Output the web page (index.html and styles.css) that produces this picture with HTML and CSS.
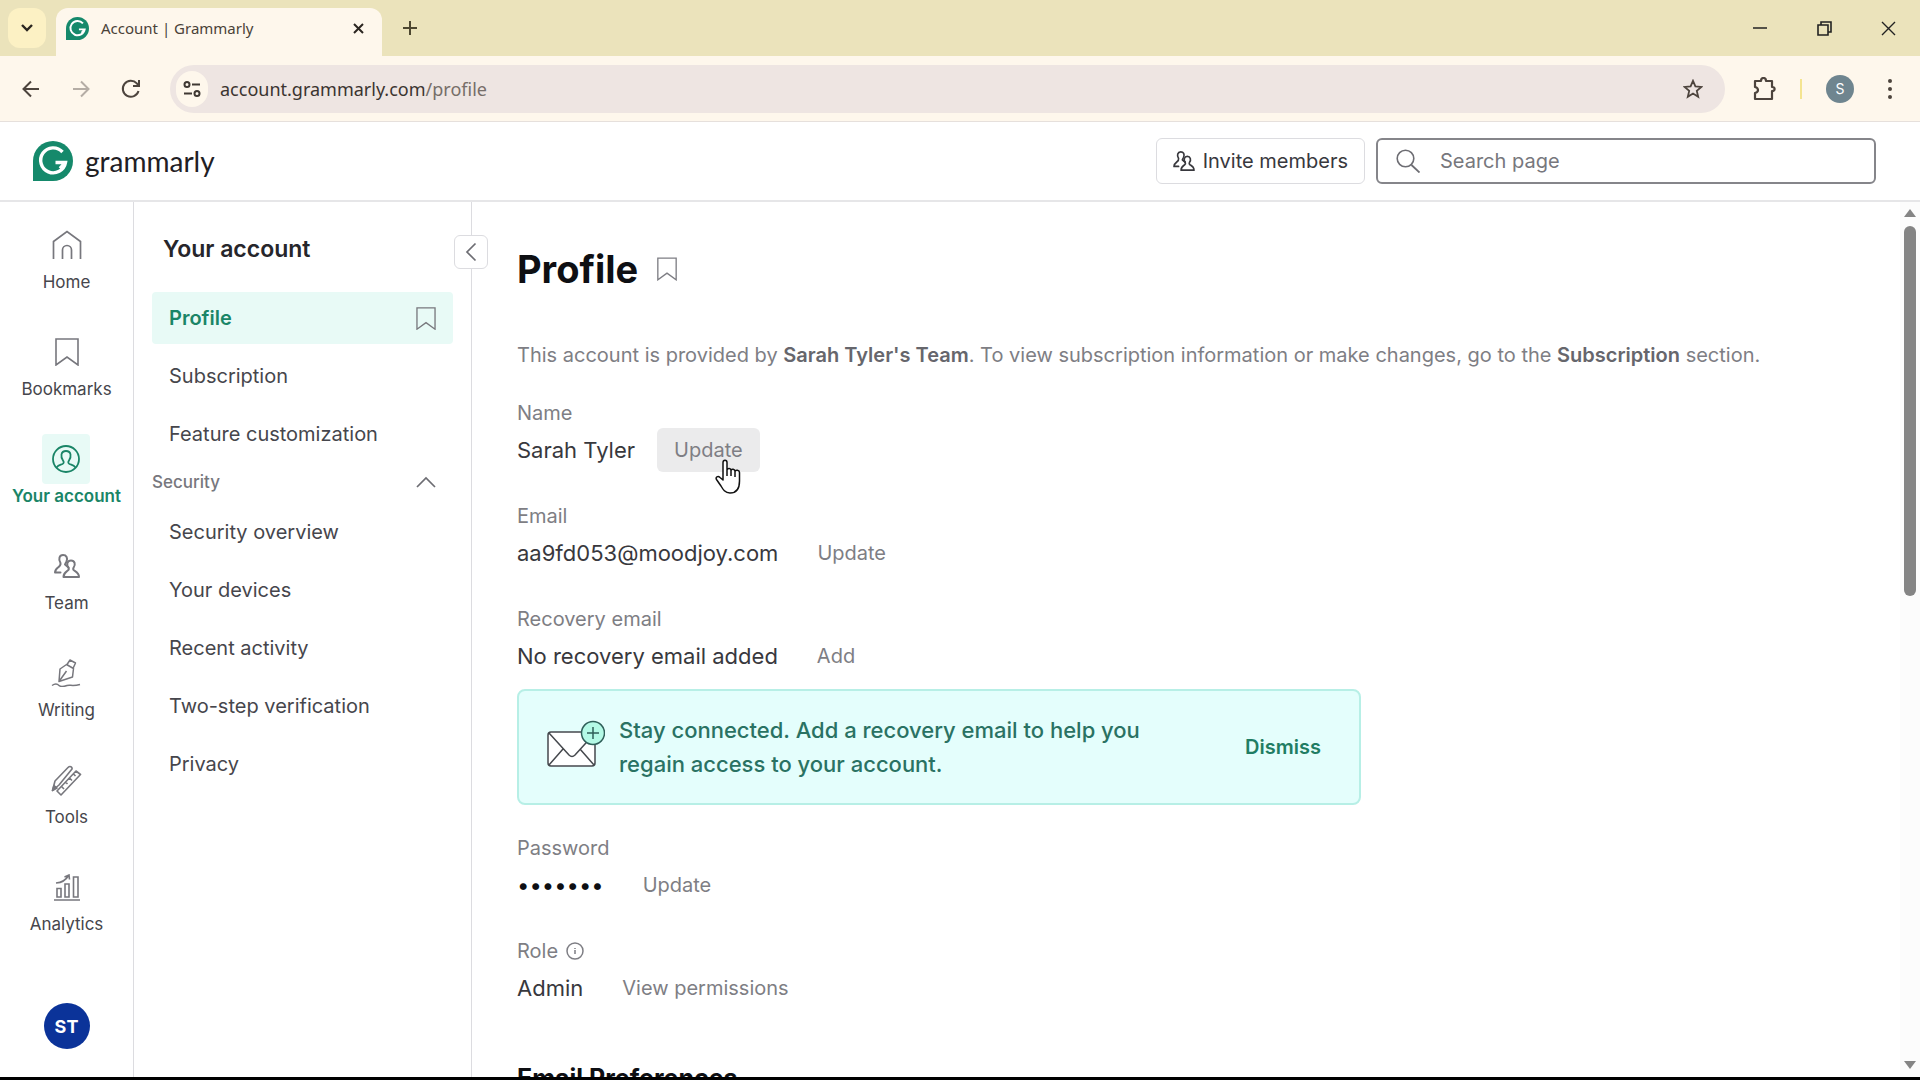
FILE: index.html
```html
<!DOCTYPE html>
<html lang="en">

<head>
    <meta charset="UTF-8" />
    <meta name="viewport" content="width=device-width, initial-scale=1.0" />
    <title>Account | Grammarly</title>
    <link rel="stylesheet" href="styles.css">
</head>

<body>
    <!-- shared icon shapes -->
    <svg class="sprite" aria-hidden="true">
        <symbol id="logo" viewBox="0 0 40 40">
            <path d="M0 40V20a20 20 0 1 1 20 20z" fill="#15896b" />
            <path d="M29.500 11A12.500 12.500 0 1 0 32.500 21.500H22.500M32.500 21.500l-5.500 6" fill="none" stroke="#fff" stroke-width="3.400" />
        </symbol>
        <symbol id="bookmark" viewBox="0 0 24 28">
            <path d="M1 1h22v26l-11-8-11 8z" fill="none" stroke="currentColor" stroke-width="1.600" />
        </symbol>
        <symbol id="people" viewBox="0 0 26 24">
            <g fill="none" stroke="currentColor" stroke-width="2" stroke-linejoin="round" stroke-linecap="round">
                <path d="M6.500 9C4 5 5.500 1 9 1s5 3 3.500 6.500L11 10.500l3.500 3M6.500 9c.5 2-.5 3-2.500 4.500C2 15 1 16 1 18.500h5.500" />
                <path d="M17 6.500c3.700 0 5 4 2.500 7.300-.6 1.200-.3 2 .7 2.700 2.500 1.500 4.800 2.500 4.800 6.500H9.500c0-4 2.300-5 4.300-6.500 1-.7 1.300-1.500.7-2.700-2.500-3.300-1.200-7.300 2.500-7.300z" />
            </g>
        </symbol>
    </svg>

    <div class="tabstrip">
        <button class="tab-search" aria-label="Search tabs">
            <svg width="12" height="8" viewBox="0 0 12 8"><path d="M1 1l5 5 5-5" fill="none" stroke="#2b2620" stroke-width="2.400" /></svg>
        </button>
        <div class="tab">
            <svg width="23" height="23"><use href="#logo" /></svg>
            <span>Account | Grammarly</span>
            <button class="tab-close" aria-label="Close tab">
                <svg width="11" height="11" viewBox="0 0 11 11"><path d="M1 1l9 9M10 1l-9 9" stroke="#2b2620" stroke-width="2" /></svg>
            </button>
        </div>
        <button class="tab-new" aria-label="New tab">
            <svg width="16" height="16" viewBox="0 0 16 16"><path d="M8 1v14M1 8h14" stroke="#4d4730" stroke-width="2" /></svg>
        </button>
        <div class="window-buttons">
            <button aria-label="Minimize"><svg width="14" height="14" viewBox="0 0 14 14"><path d="M0 7h14" stroke="#222" stroke-width="1.500" /></svg></button>
            <button aria-label="Restore"><svg width="15" height="15" viewBox="0 0 15 15"><path d="M1 4h10v10H1zM4 4V1h10v10h-3" fill="none" stroke="#222" stroke-width="1.600" /></svg></button>
            <button aria-label="Close"><svg width="15" height="15" viewBox="0 0 15 15"><path d="M1 1l13 13M14 1L1 14" stroke="#222" stroke-width="1.400" /></svg></button>
        </div>
    </div>

    <div class="toolbar">
        <div class="nav-buttons">
            <button aria-label="Back"><svg width="18" height="18" viewBox="0 0 18 18"><path d="M17 9H2M9 1.500L1.500 9 9 16.500" fill="none" stroke="#4d443d" stroke-width="2" /></svg></button>
            <button aria-label="Forward"><svg width="18" height="18" viewBox="0 0 18 18"><path d="M1 9h15M9 1.500L16.500 9 9 16.500" fill="none" stroke="#b5ada5" stroke-width="2" /></svg></button>
            <button aria-label="Reload"><svg width="20" height="20" viewBox="0 0 20 20"><path d="M17.500 12A8 8 0 1 1 15.800 4.400l1.700 2M18 1v6h-6" fill="none" stroke="#4d443d" stroke-width="2" /></svg></button>
        </div>
        <div class="omnibox">
            <button class="site-info" aria-label="View site information">
                <svg width="18" height="18" viewBox="0 0 18 18"><g fill="none" stroke="#3f3833" stroke-width="2"><circle cx="4" cy="4.500" r="2.500" /><path d="M9 4.500h8M1 13.500h8" /><circle cx="14" cy="13.500" r="2.500" /></g></svg>
            </button>
            <span class="url">account.grammarly.com<span class="path">/profile</span></span>
            <button class="star" aria-label="Bookmark this tab">
                <svg width="20" height="20" viewBox="0 0 20 20"><path d="M10 1.800l2.400 5.600 6 .5-4.600 4 1.400 5.900-5.200-3.200-5.200 3.200 1.400-5.900-4.600-4 6-.5z" fill="none" stroke="#4d443d" stroke-width="1.800" /></svg>
            </button>
        </div>
        <button class="extensions" aria-label="Extensions">
            <svg width="23" height="24" viewBox="0 0 23 24"><path d="M2 4h6c0-4 5-4 5 0h6v6c3.500 0 3.500 4 0 4v8H2v-6c4-1 4-5 0-6z" fill="none" stroke="#4d443d" stroke-width="2.200" stroke-linejoin="round" /></svg>
        </button>
        <span class="divider"></span>
        <button class="user" aria-label="Profile S">S</button>
        <button class="menu" aria-label="Menu">
            <svg width="4" height="20" viewBox="0 0 4 20"><g fill="#4d443d"><circle cx="2" cy="2" r="2" /><circle cx="2" cy="10" r="2" /><circle cx="2" cy="18" r="2" /></g></svg>
        </button>
    </div>

    <header class="header">
        <a class="brand" href="#">
            <svg width="40" height="40"><use href="#logo" /></svg>
            <span>grammarly</span>
        </a>
        <button class="invite">
            <svg width="22" height="20"><use href="#people" /></svg>
            Invite members
        </button>
        <label class="search">
            <svg width="24" height="24" viewBox="0 0 24 24"><path d="M15.500 16l8 7.500" stroke="#6d6d73" stroke-width="1.800" /><circle cx="9.500" cy="9.500" r="8.300" fill="none" stroke="#6d6d73" stroke-width="1.600" /></svg>
            <input type="text" placeholder="Search page" aria-label="Search page" />
        </label>
    </header>

    <div class="app">
        <nav class="rail">
            <a href="#">
                <span class="icon"><svg width="30" height="30" viewBox="0 0 30 30"><path d="M1.500 29V11.500L15 1.500l13.500 10V29M10.500 29V20a4.500 4.500 0 0 1 9 0v9" fill="none" stroke="currentColor" stroke-width="1.700" /></svg></span>
                Home
            </a>
            <a href="#">
                <span class="icon"><svg width="24" height="28"><use href="#bookmark" /></svg></span>
                Bookmarks
            </a>
            <a href="#" class="active">
                <span class="icon"><svg width="28" height="28" viewBox="0 0 28 28"><g fill="none" stroke="currentColor" stroke-width="1.800"><circle cx="14" cy="14" r="13" /><path d="M4.500 22.500c2-2.500 4-2.500 6-3.500 1.500-.8 1.500-2 .5-3.500C8.500 12 8.500 6 14 6s5.500 6 3 9.500c-1 1.500-1 2.700.5 3.500 2 1 4 1 6 3.500" /></g></svg></span>
                Your account
            </a>
            <a href="#">
                <span class="icon"><svg width="26" height="24"><use href="#people" /></svg></span>
                Team
            </a>
            <a href="#">
                <span class="icon"><svg width="30" height="28" viewBox="0 0 30 28"><g fill="none" stroke="currentColor" stroke-width="1.500" stroke-linejoin="round"><path d="M15.500 5.500l7 4-1 8.500-13.500 4.500L9 10zM16 5.500l3-4.500 5.500 3-2.500 5.500M8 22.500L15.500 12" /><path d="M1 26.500c3-2 5-2 7 0s5 1 8 0 5 1 13-1" /></g></svg></span>
                Writing
            </a>
            <a href="#">
                <span class="icon"><svg width="31" height="31" viewBox="0 0 31 31"><g fill="none" stroke="currentColor" stroke-width="1.600" stroke-linejoin="round"><path d="M1.500 25.500L4 16 17 2.500c2-2 4.500-.5 4 1.500L8 20zM1.500 25.500l3-3M25 6l4.500 3.500L10 30l-4-4zM22.500 9l2 2M18.500 13l2.500 2.500M14.500 17l2 2M10.500 21.500l2.500 2.500" /><path d="M1.500 25.500l1.500-5 3 2.500z" fill="currentColor" /></g></svg></span>
                Tools
            </a>
            <a href="#">
                <span class="icon"><svg width="26" height="27" viewBox="0 0 26 27"><g fill="none" stroke="currentColor" stroke-width="1.600"><path d="M3 14.500h4V23H3zM11 10h4v13h-4zM19.500 3H24v20h-4.500zM0 26h26" /><path d="M2 9c6-.5 10-3 12.500-7.500M10.500 3l4.500-2 .5 4.500" /></g></svg></span>
                Analytics
            </a>
            <button class="avatar">ST</button>
        </nav>

        <aside class="panel">
            <h2>Your account</h2>
            <button class="collapse" aria-label="Collapse panel">
                <svg width="12" height="20" viewBox="0 0 12 20"><path d="M10.500 1.500L2 10l8.500 8.500" fill="none" stroke="#6d6d73" stroke-width="1.700" /></svg>
            </button>
            <ul>
                <li><a href="#" class="active">Profile <svg width="20" height="23"><use href="#bookmark" /></svg></a></li>
                <li><a href="#">Subscription</a></li>
                <li><a href="#">Feature customization</a></li>
            </ul>
            <button class="section">
                Security
                <svg width="20" height="12" viewBox="0 0 20 12"><path d="M1 11l9-9 9 9" fill="none" stroke="#6d6d73" stroke-width="1.700" /></svg>
            </button>
            <ul>
                <li><a href="#">Security overview</a></li>
                <li><a href="#">Your devices</a></li>
                <li><a href="#">Recent activity</a></li>
                <li><a href="#">Two-step verification</a></li>
                <li><a href="#">Privacy</a></li>
            </ul>
        </aside>

        <main class="content">
            <div class="title">
                <h1>Profile</h1>
                <button aria-label="Bookmark page"><svg width="20" height="24"><use href="#bookmark" /></svg></button>
            </div>
            <p class="intro">This account is provided by <strong>Sarah Tyler's Team</strong>. To view subscription information or make changes, go to the <strong>Subscription</strong> section.</p>

            <section class="field">
                <h3>Name</h3>
                <div class="row">
                    <span>Sarah Tyler</span>
                    <button class="hover">Update
                        <svg class="cursor" width="26" height="35" viewBox="0 0 26 35"><path d="M8 21V3.500C8 .5 12 .5 12 3.500V11c.5-2 4-2 4 .5.5-2 4-1.500 4 1 .5-2 4.500-1.500 4.500 1V22c0 7-3 12-9.500 12-5 0-7-3.500-9-7l-4.500-6.500C0 18 3 16.500 5 18.500zM12 11v6M16 11.500V17M20 12.500V18" fill="#fff" stroke="#111" stroke-width="1.500" stroke-linejoin="round" /></svg>
                    </button>
                </div>
            </section>
            <section class="field">
                <h3>Email</h3>
                <div class="row">
                    <span>aa9fd053@moodjoy.com</span>
                    <button>Update</button>
                </div>
            </section>
            <section class="field">
                <h3>Recovery email</h3>
                <div class="row">
                    <span>No recovery email added</span>
                    <button>Add</button>
                </div>
                <div class="banner">
                    <svg width="58" height="54" viewBox="0 0 58 54">
                        <rect x="1" y="12" width="47" height="34" rx="3" fill="#fff" stroke="#45484d" stroke-width="1.500" />
                        <path d="M2 13l20 22c2 2 4 2 6 0l20-22M2 45l14-16M47 45L33 29" fill="none" stroke="#45484d" stroke-width="1.500" />
                        <circle cx="46" cy="13" r="11.500" fill="#b4fae6" stroke="#2f5f59" stroke-width="1.500" />
                        <path d="M46 7v12M40 13h12" stroke="#2f5f59" stroke-width="1.500" />
                    </svg>
                    <p>Stay connected. Add a recovery email to help you regain access to your account.</p>
                    <button>Dismiss</button>
                </div>
            </section>
            <section class="field">
                <h3>Password</h3>
                <div class="row">
                    <span class="dots">•••••••</span>
                    <button>Update</button>
                </div>
            </section>
            <section class="field">
                <h3>Role <svg width="18" height="18" viewBox="0 0 18 18"><circle cx="9" cy="9" r="8" fill="none" stroke="currentColor" stroke-width="1.500" /><path d="M9 8v4M9 6v1" stroke="currentColor" stroke-width="1.500" /></svg></h3>
                <div class="row">
                    <span>Admin</span>
                    <button>View permissions</button>
                </div>
            </section>
            <h2>Email Preferences</h2>
        </main>

        <div class="scrollbar" aria-hidden="true">
            <span class="up"></span>
            <span class="thumb"></span>
            <span class="down"></span>
        </div>
    </div>
</body>

</html>
```
FILE: styles.css
```css
* {
    box-sizing: border-box;
    margin: 0;
    padding: 0;
}

body {
    display: flex;
    flex-direction: column;
    height: 100vh;
    overflow: hidden;
    border-bottom: 3px solid #000;
    font-family: Inter, sans-serif;
    font-size: 20px;
    background-color: #fff;
    color: #46464c;
}

button {
    display: flex;
    align-items: center;
    justify-content: center;
    border: none;
    background: none;
    font: inherit;
    color: inherit;
    cursor: pointer;
}

a {
    color: inherit;
    text-decoration: none;
}

ul {
    list-style: none;
}

svg {
    display: block;
    flex: none;
}

.sprite {
    position: absolute;
    width: 0;
    height: 0;
}

/* browser window */
.tabstrip {
    display: flex;
    flex: none;
    height: 56px;
    padding: 8px 0 0 8px;
    background-color: #ebe3bb;
    font-family: "Noto Sans", sans-serif;
    font-size: 15px;
}

.tab-search {
    width: 38px;
    height: 40px;
    border-radius: 12px;
    background-color: #fcf1c4;
}

.tab {
    display: flex;
    align-items: center;
    gap: 12px;
    width: 326px;
    margin-left: 10px;
    padding: 0 16px 8px 10px;
    border-radius: 12px 12px 0 0;
    background-color: #fef7ec;
    color: #4a4238;
}

.tab-close {
    width: 16px;
    height: 16px;
    margin-left: auto;
}

.tab-new {
    width: 40px;
    height: 40px;
    margin-left: 8px;
}

.window-buttons {
    display: flex;
    height: 40px;
    margin-left: auto;
}

.window-buttons button {
    width: 64px;
}

.toolbar {
    display: flex;
    flex: none;
    align-items: center;
    height: 66px;
    padding: 0 16px 0 14px;
    border-bottom: 1px solid #e6e0dc;
    background-color: #fef7ec;
}

.nav-buttons {
    display: flex;
    gap: 16px;
    margin-right: 22px;
}

.nav-buttons button {
    width: 34px;
    height: 34px;
}

.omnibox {
    display: flex;
    flex: 1;
    align-items: center;
    height: 48px;
    padding: 0 22px 0 6px;
    border-radius: 24px;
    background-color: #eee5e2;
    font-family: "Noto Sans", sans-serif;
    font-size: 18px;
    color: #3b3430;
}

.site-info {
    width: 32px;
    height: 36px;
    border-radius: 18px;
    background-color: #fef7ec;
}

.url {
    margin-left: 12px;
}

.path {
    color: #766e69;
}

.star {
    margin-left: auto;
}

.extensions {
    margin-left: 28px;
}

.divider {
    width: 2px;
    height: 20px;
    margin: 0 24px;
    background-color: #f4e491;
}

.user {
    width: 28px;
    height: 28px;
    border-radius: 50%;
    background-color: #6f858f;
    font-size: 14px;
    color: #fff;
}

.menu {
    width: 28px;
    margin-left: 22px;
}

/* page header */
.header {
    display: flex;
    flex: none;
    align-items: center;
    gap: 11px;
    height: 80px;
    padding: 0 44px 0 33px;
    border-bottom: 2px solid #e6e6e8;
}

.brand {
    display: flex;
    align-items: center;
    gap: 12px;
    margin-right: auto;
    font-family: Lato, sans-serif;
    font-size: 28px;
    line-height: 36px;
    color: #1f2024;
}

.invite {
    gap: 8px;
    height: 46px;
    padding: 0 16px;
    border: 1px solid #dcdce0;
    border-radius: 6px;
    color: #38383d;
}

.search {
    display: flex;
    align-items: center;
    gap: 20px;
    width: 500px;
    height: 46px;
    padding: 0 18px;
    border: 2px solid #85858a;
    border-radius: 6px;
}

.search input {
    flex: 1;
    min-width: 0;
    border: none;
    outline: none;
    background: none;
    font: inherit;
}

.search input::placeholder {
    color: #77777d;
    opacity: 1;
}

/* page body */
.app {
    display: flex;
    flex: 1;
    min-height: 0;
}

.rail {
    display: flex;
    flex: none;
    flex-direction: column;
    align-items: center;
    gap: 27px;
    width: 134px;
    padding: 18px 0 28px;
    border-right: 1px solid #dcdce0;
    font-size: 17px;
}

.rail a {
    display: flex;
    flex-direction: column;
    align-items: center;
    height: 80px;
    line-height: 24px;
}

.rail .icon {
    display: flex;
    align-items: center;
    justify-content: center;
    width: 48px;
    height: 50px;
    border-radius: 4px;
    color: #77777d;
}

.rail .active {
    font-weight: 600;
    color: #1a8567;
}

.rail .active .icon {
    background-color: #e8faf6;
    color: #1a8567;
}

.avatar {
    width: 46px;
    height: 46px;
    margin-top: auto;
    border-radius: 50%;
    background-color: #0b3399;
    font-size: 18px;
    font-weight: 700;
    color: #fff;
}

.panel {
    position: relative;
    flex: none;
    width: 338px;
    padding: 31px 18px 0;
    border-right: 1px solid #dcdce0;
}

.panel h2 {
    margin: 0 11px 27px;
    font-size: 23px;
    font-weight: 600;
    line-height: 32px;
    color: #26262b;
}

.collapse {
    position: absolute;
    top: 33px;
    right: -17px;
    width: 34px;
    height: 34px;
    border: 1px solid #dcdce0;
    border-radius: 6px;
    background-color: #fff;
}

.panel ul {
    display: grid;
    gap: 6px;
}

.panel li a {
    display: flex;
    align-items: center;
    justify-content: space-between;
    height: 52px;
    padding: 0 17px;
    border-radius: 4px;
}

.panel li .active {
    background-color: #e8faf6;
    font-weight: 600;
    color: #1a8567;
}

.panel li svg {
    color: #77777d;
}

.section {
    justify-content: space-between;
    width: 100%;
    height: 36px;
    margin: 4px 0 6px;
    padding-right: 17px;
    font-size: 17px;
    font-weight: 500;
    color: #77777d;
}

.content {
    flex: 1;
    min-width: 0;
    padding: 41px 44px 0 45px;
}

.title {
    display: flex;
    align-items: center;
    gap: 19px;
    margin-bottom: 46px;
}

h1 {
    font-size: 38px;
    font-weight: 700;
    line-height: 52px;
    color: #0e0f13;
}

.title button,
.intro,
.field h3,
.row button {
    color: #7e7e84;
}

.intro {
    margin-bottom: 32px;
    line-height: 28px;
}

.intro strong {
    font-weight: 600;
    color: #66666c;
}

.field {
    margin-bottom: 31px;
}

.field h3 {
    display: flex;
    align-items: center;
    gap: 8px;
    font-size: 20px;
    font-weight: 400;
    line-height: 24px;
}

.row {
    display: flex;
    align-items: center;
    gap: 22px;
    height: 46px;
    margin-top: 2px;
    font-size: 22px;
    color: #38383d;
}

.row button {
    position: relative;
    height: 44px;
    padding: 0 17px;
    border-radius: 6px;
    font-size: 20px;
}

.row .hover {
    background-color: #ebebec;
}

.cursor {
    position: absolute;
    top: 31px;
    left: 58px;
}

.dots {
    color: #0e0f13;
}

.banner {
    display: flex;
    align-items: center;
    gap: 14px;
    max-width: 844px;
    min-height: 116px;
    margin: 10px 0 30px;
    padding: 0 22px 0 28px;
    border: 2px solid #b7efe6;
    border-radius: 8px;
    background-color: #e4fefc;
}

.banner p {
    max-width: 560px;
    font-size: 22px;
    font-weight: 500;
    line-height: 34px;
    color: #2a7263;
}

.banner button {
    height: 44px;
    margin-left: auto;
    padding: 0 16px;
    font-weight: 600;
    color: #1f7d63;
}

.content h2 {
    padding-top: 20px;
    font-size: 25px;
    font-weight: 700;
    line-height: 32px;
    color: #0e0f13;
}

.scrollbar {
    display: flex;
    flex: none;
    flex-direction: column;
    align-items: center;
    width: 20px;
    padding: 7px 0 8px;
    background-color: #fcfcfc;
}

.up,
.down {
    border: 6px solid transparent;
}

.up {
    border-top: none;
    border-bottom: 8px solid #858585;
}

.down {
    margin-top: auto;
    border-bottom: none;
    border-top: 8px solid #858585;
}

.thumb {
    width: 12px;
    height: 43%;
    margin-top: 9px;
    border-radius: 6px;
    background-color: #858585;
}
```
